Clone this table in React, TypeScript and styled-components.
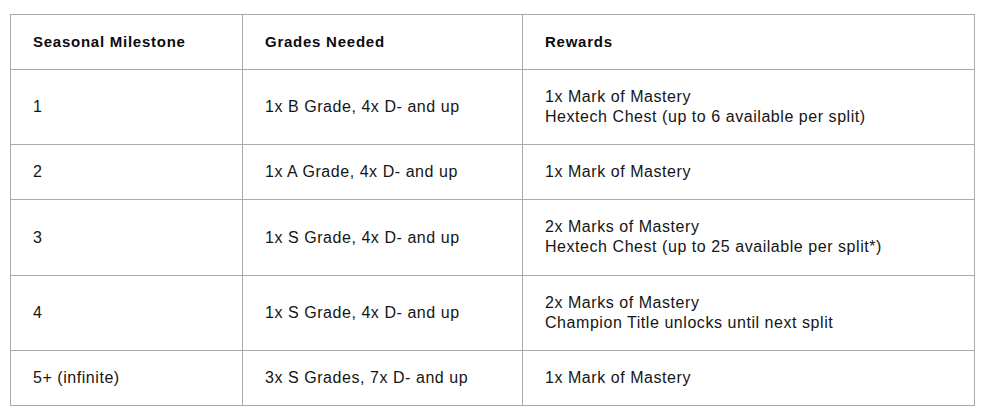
import React from "react";
import styled, { createGlobalStyle } from "styled-components";

const Global = createGlobalStyle`
  html, body { margin: 0; padding: 0; background: #ffffff; }
  body { font-family: "Liberation Sans", Arial, sans-serif; color: #111111; }
`;

const Page = styled.div`
  padding: 14px 0 0 10px;
`;

const Table = styled.table`
  width: 964px;
  border-collapse: collapse;
  table-layout: fixed;
`;

const Col = styled.col<{ $w: number }>`
  width: ${(p) => p.$w}px;
`;

const HeadCell = styled.th`
  border: 1px solid #a9a9a9;
  padding: 17px 22px;
  text-align: left;
  font-size: 15px;
  line-height: 20px;
  font-weight: 700;
  letter-spacing: 0.75px;
  color: #0c0c0c;
`;

const Cell = styled.td<{ $tall?: boolean }>`
  border: 1px solid #a9a9a9;
  padding: ${(p) => (p.$tall ? "17px 22px 18px" : "17px 22px")};
  font-size: 16px;
  line-height: 20px;
  letter-spacing: 0.55px;
  vertical-align: middle;
  color: #151515;
`;

const Line = styled.div``;

const rows: [string, string, string[], boolean?][] = [
  ["1", "1x B Grade, 4x D- and up", ["1x Mark of Mastery", "Hextech Chest (up to 6 available per split)"]],
  ["2", "1x A Grade, 4x D- and up", ["1x Mark of Mastery"]],
  ["3", "1x S Grade, 4x D- and up", ["2x Marks of Mastery", "Hextech Chest (up to 25 available per split*)"], true],
  ["4", "1x S Grade, 4x D- and up", ["2x Marks of Mastery", "Champion Title unlocks until next split"]],
  ["5+ (infinite)", "3x S Grades, 7x D- and up", ["1x Mark of Mastery"]],
];

export default function App() {
  return (
    <>
      <Global />
      <Page>
        <Table>
          <colgroup>
            <Col $w={232} />
            <Col $w={280} />
            <Col $w={452} />
          </colgroup>
          <thead>
            <tr>
              <HeadCell>Seasonal Milestone</HeadCell>
              <HeadCell>Grades Needed</HeadCell>
              <HeadCell>Rewards</HeadCell>
            </tr>
          </thead>
          <tbody>
            {rows.map(([m, g, r, tall]) => (
              <tr key={m}>
                <Cell>{m}</Cell>
                <Cell>{g}</Cell>
                <Cell $tall={tall}>
                  {r.map((l) => (
                    <Line key={l}>{l}</Line>
                  ))}
                </Cell>
              </tr>
            ))}
          </tbody>
        </Table>
      </Page>
    </>
  );
}
